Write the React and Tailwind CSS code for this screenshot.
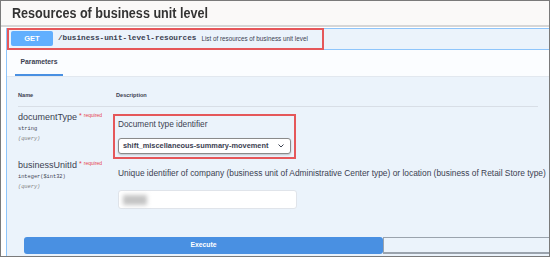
export default function App() {
  const mono = { fontFamily: '"Liberation Mono", "DejaVu Sans Mono", monospace' };
  return (
    <div className="w-[550px] h-[257px] overflow-hidden bg-white border border-[#7a7a7a] font-['Liberation_Sans',Arial,sans-serif] text-[#3b4151]">
      <div className="h-[26px] bg-[#faf9f8] border-b-2 border-[#d6d6d6] flex items-center pl-[11px]">
        <h1 className="text-[12.6px] font-bold text-[#333] leading-none scale-y-[1.2] origin-left">Resources of business unit level</h1>
      </div>
      <div className="pl-[5px] pt-[1px]">
        <div className="border-l border-t border-[#8ec5fb] bg-[#ebf3fb] h-[240px]">
          <div className="h-[21px] border-b border-[#8ec5fb] flex items-center">
            <div className="flex items-center h-[22px] w-[317px] -mt-[1px] border-2 border-[#e5575a] pl-[2px] gap-[5px] whitespace-nowrap">
              <span className="w-[42px] h-[15px] rounded-[2px] bg-[#61affe] text-white text-[7.5px] font-bold flex items-center justify-center">GET</span>
              <span className="text-[7.7px] font-bold text-[#3b4151]" style={mono}>/business-unit-level-resources</span>
              <span className="text-[6.3px] text-[#3b4151]">List of resources of business unit level</span>
            </div>
          </div>
          <div className="h-[27px] bg-[#fbfdff] border-b border-[#e2e8ef] pl-[8px] flex items-end">
            <div className="w-[48px] h-[25px] border-b-2 border-[#4990e2] flex items-center justify-center text-[6.8px] font-bold text-[#3b4151]">Parameters</div>
          </div>
          <div className="px-[11px]">
            <div className="flex h-[30px] items-end pb-[7px] border-b border-[#d8dee6] text-[5.6px] font-bold">
              <span className="w-[98px]">Name</span>
              <span>Description</span>
            </div>
            <div className="flex items-start pt-[3px]">
              <div className="w-[95px] shrink-0 pt-[2px]">
                <div className="flex items-start">
                  <span className="text-[9px] text-[#3b4151] leading-[11px]">documentType</span>
                  <span className="text-[#e6434b] text-[7px] leading-[8px] ml-[2px]">*</span>
                  <span className="text-[#e6434b] text-[5px] leading-[6px] ml-[2px]">required</span>
                </div>
                <div className="text-[5.3px] text-[#3b4151] mt-[3px] leading-[7px]" style={mono}>string</div>
                <div className="text-[5.3px] italic text-[#808080] mt-[3px] leading-[7px]" style={mono}>(query)</div>
              </div>
              <div className="mt-[4px] w-[183px] h-[45px] border-2 border-[#e5575a] pl-[3px] pt-[3px]">
                <div className="text-[8.3px] text-[#3b4151] leading-[10px]">Document type identifier</div>
                <div className="mt-[9px] w-[173px] h-[16px] rounded-[3px] border border-[#8a8a8a] bg-white shadow-[0_1px_2px_rgba(0,0,0,0.2)] flex items-center justify-between pl-[4px] pr-[6px]">
                  <span className="text-[7.4px] font-bold text-[#3b4151] whitespace-nowrap">shift_miscellaneous-summary-movement</span>
                  <svg width="6" height="4" viewBox="0 0 6 4"><path d="M0.5 0.5 L3 3 L5.5 0.5" fill="none" stroke="#3b4151" strokeWidth="1" /></svg>
                </div>
              </div>
            </div>
            <div className="flex items-start">
              <div className="w-[100px] shrink-0 pt-[1px]">
                <div className="flex items-start">
                  <span className="text-[9px] text-[#3b4151] leading-[11px]">businessUnitId</span>
                  <span className="text-[#e6434b] text-[7px] leading-[8px] ml-[2px]">*</span>
                  <span className="text-[#e6434b] text-[5px] leading-[6px] ml-[2px]">required</span>
                </div>
                <div className="text-[5.3px] text-[#3b4151] mt-[3px] leading-[7px]" style={mono}>integer($int32)</div>
                <div className="text-[5.3px] italic text-[#808080] mt-[3px] leading-[7px]" style={mono}>(query)</div>
              </div>
              <div className="pt-[9px]">
                <div className="text-[8.4px] text-[#3b4151] leading-[10px] whitespace-nowrap">Unique identifier of company (business unit of Administrative Center type) or location (business of Retail Store type)</div>
                <div className="mt-[12px] w-[179px] h-[19px] rounded-[3px] border border-[#e0e4ea] bg-white flex items-center pl-[4px]">
                  <div className="w-[24px] h-[10px] bg-[#c4c4c4] blur-[2px]" />
                </div>
              </div>
            </div>
          </div>
          <div className="flex mt-[28px] pl-[17px] h-[17px]">
            <button className="w-[359px] h-[17px] rounded-[3px] bg-[#4990e2] text-white text-[6.8px] font-bold">Execute</button>
            <div className="flex-1 border-t border-b-2 border-l border-[#9aa3ad] bg-[#ebf3fb]" />
          </div>
        </div>
      </div>
    </div>
  );
}
